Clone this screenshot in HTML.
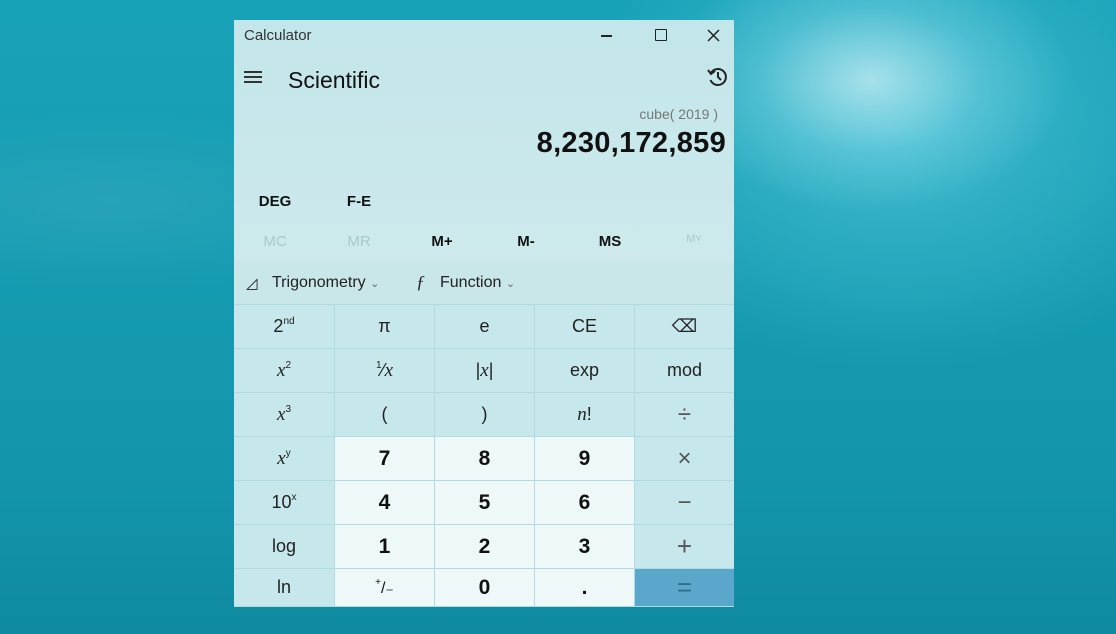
<!DOCTYPE html>
<html><head><meta charset="utf-8"><style>
*{margin:0;padding:0;box-sizing:border-box}
body{width:1116px;height:634px;overflow:hidden;position:relative;font-family:"Liberation Sans",sans-serif;
background:
radial-gradient(ellipse 200px 130px at 870px 80px,rgba(225,248,252,.65),rgba(140,220,235,.35) 55%,rgba(0,0,0,0) 100%),
radial-gradient(ellipse 330px 240px at 900px 130px,rgba(100,210,228,.55),rgba(0,0,0,0) 100%),
radial-gradient(ellipse 300px 90px at 110px 200px,rgba(60,170,190,.45),rgba(0,0,0,0) 100%),
linear-gradient(180deg,#18a2b8 0%,#159bb1 45%,#1395ab 75%,#0f8aa0 100%);}
.win{position:absolute;left:234px;top:20px;width:500px;height:587px;
background:linear-gradient(180deg,#c2e6ea 0%,#cde9ec 40%,#d2ebee 70%);color:#111}
.title{position:absolute;left:10px;top:7px;font-size:15px;color:#333}
.sci{position:absolute;left:54px;top:47px;font-size:23px;color:#111}
.ham{position:absolute;left:10px;top:51px;width:18px}
.ham i{display:block;height:2px;background:#333;margin-bottom:3px}
.expr{position:absolute;right:16px;top:86px;font-size:14px;color:#777}
.res{position:absolute;right:8px;top:107px;font-size:29px;font-weight:bold;color:#111;letter-spacing:.3px}
.t{position:absolute;font-size:15px;font-weight:bold;transform:translateX(-50%)}
.g{color:#a9c9cd;font-weight:normal}
.bar{position:absolute;left:0;top:242px;width:500px;height:42px;background:#c9e6e9;font-size:16px;color:#222}
.grid{position:absolute;left:0;top:284px;width:500px;height:303px;display:grid;grid-template-columns:100px 99px 99px 99px 99px;grid-template-rows:43px 43px 43px 43px 43px 43px 37px;gap:1px;background:#b0dbe0;padding-top:1px}
.grid>div{display:flex;align-items:center;justify-content:center;background:#c6e7eb;font-size:18px;color:#222}
.grid .n{background:#eef8f9;font-weight:bold;font-size:21px;color:#111}
.grid .eq{background:#5aa7cb;color:#2f6d8a;font-size:26px}
.grid .op{color:#555;font-size:24px}
.sv{font-family:"Liberation Serif",serif;font-style:italic;font-size:19px}
sup{font-size:10px;vertical-align:8px;line-height:0}
</style></head><body>
<div class="win">
<div class="title">Calculator</div>
<div style="position:absolute;left:367px;top:15px;width:11px;height:1.5px;background:#222"></div>
<div style="position:absolute;left:421px;top:9px;width:12px;height:12px;border:1.5px solid #222;border-radius:1px"></div>
<svg style="position:absolute;left:473px;top:9px" width="13" height="13" viewBox="0 0 13 13" stroke="#222" stroke-width="1.5"><path d="M1 1L12 12M12 1L1 12"/></svg>
<div class="ham"><i></i><i></i><i></i></div>
<div class="sci">Scientific</div>
<svg style="position:absolute;left:472px;top:45px" width="24" height="24" viewBox="0 0 24 24" fill="none" stroke="#222" stroke-width="2"><path d="M5 8 A8 8 0 1 1 4.5 15"/><path d="M2 5 L5 9 L9 6"/><path d="M12 7 V12 L15 15"/></svg>
<div class="expr">cube( 2019 )</div>
<div class="res">8,230,172,859</div>
<div class="t" style="left:41px;top:173px">DEG</div>
<div class="t" style="left:125px;top:173px">F-E</div>
<div class="t g" style="left:41px;top:213px">MC</div>
<div class="t g" style="left:125px;top:213px">MR</div>
<div class="t" style="left:208px;top:213px">M+</div>
<div class="t" style="left:292px;top:213px">M-</div>
<div class="t" style="left:376px;top:213px">MS</div>
<div class="t g" style="left:460px;top:213px;font-size:11px">M˅</div>
<div class="bar">
<span style="position:absolute;left:12px;top:12px;font-size:15px">◿</span>
<span style="position:absolute;left:38px;top:12px">Trigonometry <span style="font-size:11px;color:#666">⌄</span></span>
<span style="position:absolute;left:182px;top:10px;font-family:'Liberation Serif',serif;font-style:italic;font-size:18px">ƒ</span>
<span style="position:absolute;left:206px;top:12px">Function <span style="font-size:11px;color:#666">⌄</span></span>
</div>
<div class="grid">
<div><span>2<sup>nd</sup></span></div><div>π</div><div>e</div><div>CE</div><div>⌫</div>
<div><span><span class="sv">x</span><sup>2</sup></span></div><div><span><sup>1</sup>⁄<span class="sv">x</span></span></div><div><span>|<span class="sv">x</span>|</span></div><div>exp</div><div>mod</div>
<div><span><span class="sv">x</span><sup>3</sup></span></div><div>(</div><div>)</div><div><span><span class="sv">n</span>!</span></div><div class="op">÷</div>
<div><span><span class="sv">x</span><sup>y</sup></span></div><div class="n">7</div><div class="n">8</div><div class="n">9</div><div class="op">×</div>
<div><span>10<sup>x</sup></span></div><div class="n">4</div><div class="n">5</div><div class="n">6</div><div class="op">−</div>
<div>log</div><div class="n">1</div><div class="n">2</div><div class="n">3</div><div class="op" style="font-size:26px">+</div>
<div>ln</div><div class="n" style="font-weight:normal;font-size:16px"><span><sup>+</sup>/₋</span></div><div class="n">0</div><div class="n">.</div><div class="eq">=</div>
</div>
</div>
</body></html>
